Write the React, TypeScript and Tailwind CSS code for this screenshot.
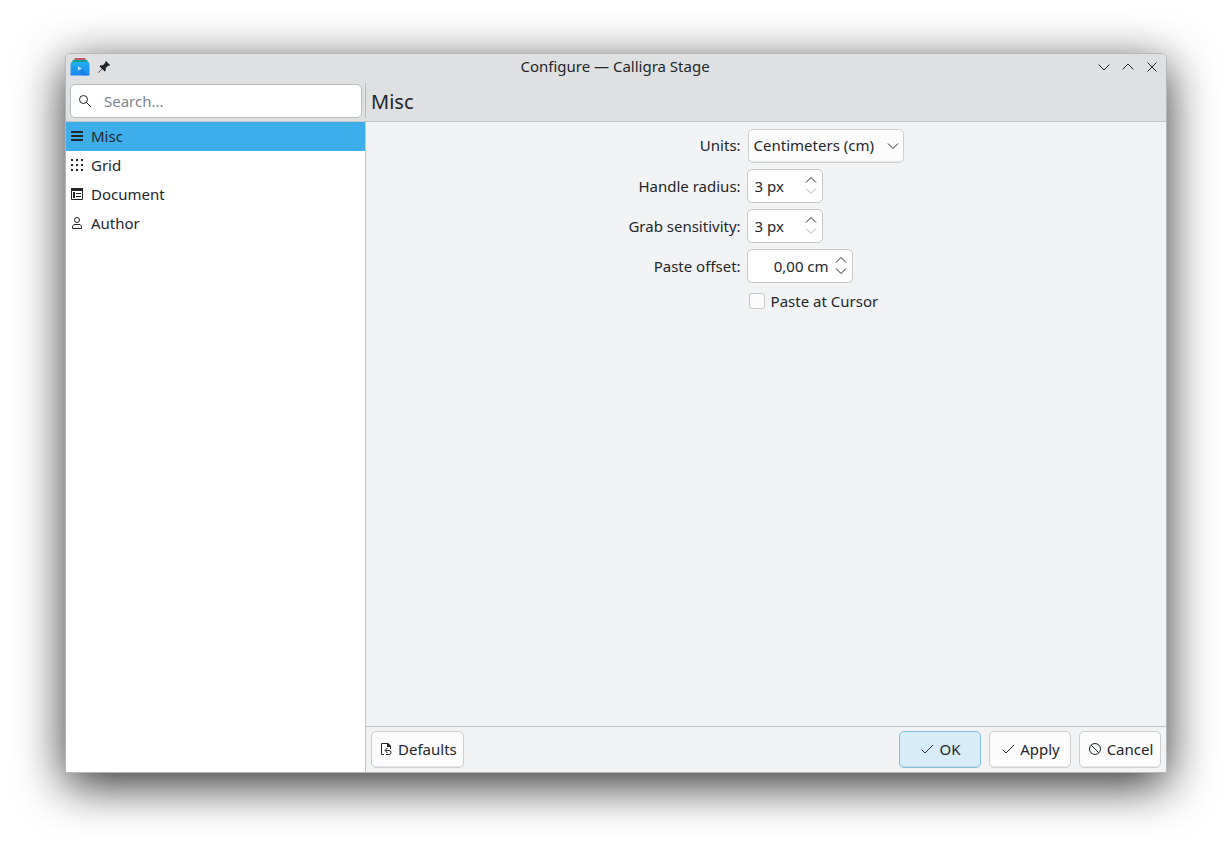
import { useState, type ReactNode } from "react";

type IconProps = { className?: string };

function Glyph({ children, className = "" }: { children: ReactNode; className?: string }) {
  return (
    <svg viewBox="0 0 16 16" className={`size-4 shrink-0 ${className}`} fill="none" stroke="currentColor" aria-hidden>
      {children}
    </svg>
  );
}

const AppIcon = () => (
  <svg viewBox="0 0 20 20" className="size-5 shrink-0" aria-hidden>
    <defs>
      <linearGradient id="stage-blue" x1="0" y1="0" x2="0" y2="1">
        <stop offset="0" stopColor="#1fb0ee" />
        <stop offset="1" stopColor="#1d86f7" />
      </linearGradient>
    </defs>
    <path d="M5 1h10l1.5 3h-13z" fill="#bf5a72" />
    <path d="M3 3h14l2 4H1z" fill="#17a08c" />
    <path d="M1.5 5h17l1 2v11.5H.5V7z" fill="url(#stage-blue)" />
    <path d="M8 13.5l4-2 6.5 7H12z" fill="#1769cf" opacity="0.35" />
    <path d="M8 9.5l4 2-4 2z" fill="#c4e9ff" />
  </svg>
);

const PinIcon = () => (
  <Glyph>
    <path
      d="M10 2l4 4-.9.9-.9-.2-2.4 2.4v2.3l-1.1 1.1-2.4-2.4L3 13.4 2 14l.6-1L5.900 9.700 3.500 7.300l1.100-1.100h2.300l2.400-2.400-.2-.9z"
      fill="currentColor"
      stroke="none"
    />
  </Glyph>
);

const SearchIcon = () => (
  <Glyph>
    <circle cx="6.5" cy="6.5" r="4" />
    <path d="M9.5 9.5l4.5 4.5" />
  </Glyph>
);

const MiscIcon = () => (
  <Glyph>
    <path d="M2 4h12M2 8h12M2 12h12" strokeWidth="2" />
  </Glyph>
);

const GridIcon = () => (
  <Glyph>
    <path d="M2 3h12M2 8h12M2 13h12" strokeWidth="2" strokeDasharray="2 3" />
  </Glyph>
);

const DocumentIcon = () => (
  <Glyph>
    <path d="M2.5 2.5h11v11h-11zM7 7.5h5M7 10.5h5" />
    <path d="M2 3.5h12" strokeWidth="3" />
    <path d="M5 6v6" strokeWidth="2" />
  </Glyph>
);

const AuthorIcon = () => (
  <Glyph>
    <circle cx="8" cy="5" r="2.5" />
    <path d="M3.5 13.5V12c0-1.5 1-2.5 2.500-2.500h4c1.500 0 2.500 1 2.500 2.500v1.500z" />
  </Glyph>
);

const DefaultsIcon = () => (
  <Glyph>
    <path d="M6 13.5H3.500v-11H10l2.500 3V8" />
    <path d="M9 2v4h4V5l-3-3z" fill="currentColor" stroke="none" />
    <path d="M9.500 7l-2.500 2.500L9.500 12M7.500 9.500H11a2 2 0 0 1 0 4H8" />
  </Glyph>
);

const CheckIcon = () => (
  <Glyph>
    <path d="M2.500 8.500L6 12l8-8" />
  </Glyph>
);

const CancelIcon = () => (
  <Glyph>
    <circle cx="8" cy="8" r="5.500" />
    <path d="M4.100 4.100l7.800 7.800" />
  </Glyph>
);

const ChevronDown = ({ className }: IconProps) => (
  <Glyph className={className}>
    <path d="M2.500 5.500L8 11l5.500-5.500" />
  </Glyph>
);

const ChevronUp = ({ className }: IconProps) => (
  <Glyph className={className}>
    <path d="M2.500 10.500L8 5l5.500 5.500" />
  </Glyph>
);

const CloseIcon = () => (
  <Glyph>
    <path d="M3.500 3.500l9 9M12.500 3.500l-9 9" />
  </Glyph>
);

const PAGES = [
  { name: "Misc", icon: MiscIcon },
  { name: "Grid", icon: GridIcon },
  { name: "Document", icon: DocumentIcon },
  { name: "Author", icon: AuthorIcon },
];

interface SpinBoxProps {
  id: string;
  initial: number;
  min: number;
  format: (value: number) => string;
  className: string;
  inputClassName: string;
}

function SpinBox({ id, initial, min, format, className, inputClassName }: SpinBoxProps) {
  const [value, setValue] = useState(initial);
  const atMin = value <= min;

  return (
    <div className={`flex h-[34px] items-center rounded-[5px] border border-[#c6c8ca] bg-white ${className}`}>
      <input
        id={id}
        type="text"
        readOnly
        value={format(value)}
        className={`min-w-0 flex-1 bg-transparent outline-none ${inputClassName}`}
      />
      <div className="flex w-[22px] shrink-0 flex-col items-center pb-px">
        <button type="button" aria-label="Increase" onClick={() => setValue(value + 1)} className="flex h-[11px] items-center">
          <svg viewBox="0 0 12 8" className="h-2 w-3" fill="none" stroke="currentColor" aria-hidden>
            <path d="M1 6.5l5-5 5 5" />
          </svg>
        </button>
        <button
          type="button"
          aria-label="Decrease"
          disabled={atMin}
          onClick={() => setValue(value - 1)}
          className="flex h-[11px] items-center disabled:text-[#b3b5b6]"
        >
          <svg viewBox="0 0 12 8" className="h-2 w-3" fill="none" stroke="currentColor" aria-hidden>
            <path d="M1 1.5l5 5 5-5" />
          </svg>
        </button>
      </div>
    </div>
  );
}

function PushButton({ icon, children, primary = false }: { icon: ReactNode; children: ReactNode; primary?: boolean }) {
  const tone = primary ? "border-[#83c0df] bg-[#d6ecf8]" : "border-[#cdcfd0] bg-[#fcfcfc]";
  return (
    <button
      type="button"
      className={`flex h-[37px] min-w-[82px] items-center justify-center gap-1 rounded-[5px] border px-[6px] pb-[2px] shadow-[inset_0_-1px_0_rgba(0,0,0,0.08)] ${tone}`}
    >
      {icon}
      {children}
    </button>
  );
}

export default function App() {
  const [page, setPage] = useState("Misc");
  const [pasteAtCursor, setPasteAtCursor] = useState(false);

  return (
    <div className="flex min-h-screen flex-col bg-white px-[65px] pt-[53px] pb-[77px] font-['Noto_Sans',sans-serif] text-[15px] leading-5 text-[#232629]">
      <div className="flex flex-1 flex-col overflow-hidden rounded-t-[5px] border border-[#b6b8ba] bg-[#f2f3f5] shadow-[0_12px_48px_rgba(0,0,0,0.82)]">
        <div className="flex h-[29px] shrink-0 items-center bg-[#dee0e2] px-1 pb-[3px]">
          <div className="flex flex-1 items-center gap-[6px]">
            <AppIcon />
            <button type="button" aria-label="Keep above others">
              <PinIcon />
            </button>
          </div>
          <h1 className="pb-[2px]">Configure — Calligra Stage</h1>
          <div className="flex flex-1 items-center justify-end gap-2 pr-[2px]">
            <button type="button" aria-label="Minimize">
              <ChevronDown />
            </button>
            <button type="button" aria-label="Maximize">
              <ChevronUp />
            </button>
            <button type="button" aria-label="Close">
              <CloseIcon />
            </button>
          </div>
        </div>

        <div className="flex h-[39px] shrink-0 border-b border-[#c4c6c8] bg-[#dee0e2]">
          <div className="flex w-[300px] shrink-0 justify-between pt-px pl-1">
            <label className="flex h-[34px] w-[292px] items-center gap-[11px] rounded-[5px] border border-[#b9bbbe] bg-white px-[6px]">
              <SearchIcon />
              <input
                type="search"
                aria-label="Search"
                placeholder="Search..."
                className="min-w-0 flex-1 bg-transparent outline-none placeholder:text-[#7b8690]"
              />
            </label>
            <div className="-mt-px h-[35px] w-px bg-[#b9bbbe]" />
          </div>
          <h2 className="pt-[5px] pl-[5px] text-[20px] leading-7">{page}</h2>
        </div>

        <div className="flex flex-1">
          <nav className="w-[300px] shrink-0 border-r border-[#c4c6c8] bg-white">
            {PAGES.map(({ name, icon: Icon }) => (
              <button
                key={name}
                type="button"
                onClick={() => setPage(name)}
                className={`flex h-[29px] w-full items-center gap-[6px] pb-px pl-[3px] ${name === page ? "bg-[#3daee9]" : ""}`}
              >
                <Icon />
                {name}
              </button>
            ))}
          </nav>

          <div className="flex min-w-0 flex-1 flex-col">
            <main className="grid flex-1 grid-cols-[auto_auto] content-start items-center justify-center gap-x-[6px] gap-y-[6px] pt-[7px]">
              <label htmlFor="units" className="pb-[2px] text-right">
                Units:
              </label>
              <div className="ml-px grid h-[34px] w-[156px] items-center rounded-[5px] border border-[#cdcfd0] bg-[#fcfcfc] shadow-[inset_0_-1px_0_rgba(0,0,0,0.08)]">
                <select
                  id="units"
                  defaultValue="cm"
                  className="col-start-1 row-start-1 h-full w-full appearance-none bg-transparent pb-[2px] pl-[5px] outline-none"
                >
                  <option value="mm">Millimeters (mm)</option>
                  <option value="cm">Centimeters (cm)</option>
                  <option value="in">Inches (in)</option>
                </select>
                <svg
                  viewBox="0 0 12 8"
                  className="pointer-events-none col-start-1 row-start-1 mr-1 h-2 w-3 justify-self-end"
                  fill="none"
                  stroke="currentColor"
                  aria-hidden
                >
                  <path d="M1 1.5l5 5 5-5" />
                </svg>
              </div>

              <label htmlFor="handle-radius" className="text-right">
                Handle radius:
              </label>
              <SpinBox
                id="handle-radius"
                initial={3}
                min={3}
                format={(v) => `${v} px`}
                className="w-[76px]"
                inputClassName="pl-[7px]"
              />

              <label htmlFor="grab-sensitivity" className="text-right">
                Grab sensitivity:
              </label>
              <SpinBox
                id="grab-sensitivity"
                initial={3}
                min={3}
                format={(v) => `${v} px`}
                className="w-[76px]"
                inputClassName="pl-[7px]"
              />

              <label htmlFor="paste-offset" className="text-right">
                Paste offset:
              </label>
              <SpinBox
                id="paste-offset"
                initial={0}
                min={-100}
                format={(v) => `${v.toFixed(2).replace(".", ",")} cm`}
                className="w-[106px]"
                inputClassName="pr-[1px] text-right"
              />

              <label className="col-start-2 flex items-center gap-[6px] pt-[2px] pl-[2px]">
                <input
                  type="checkbox"
                  checked={pasteAtCursor}
                  onChange={(event) => setPasteAtCursor(event.target.checked)}
                  className="size-4 appearance-none rounded-[3px] border border-[#c6c8ca] bg-[#fcfcfc] checked:bg-[#3daee9]"
                />
                Paste at Cursor
              </label>
            </main>

            <footer className="flex gap-2 border-t border-[#c4c6c8] px-[5px] py-1">
              <PushButton icon={<DefaultsIcon />}>Defaults</PushButton>
              <div className="flex-1" />
              <PushButton icon={<CheckIcon />} primary>
                OK
              </PushButton>
              <PushButton icon={<CheckIcon />}>Apply</PushButton>
              <PushButton icon={<CancelIcon />}>Cancel</PushButton>
            </footer>
          </div>
        </div>
      </div>
    </div>
  );
}
